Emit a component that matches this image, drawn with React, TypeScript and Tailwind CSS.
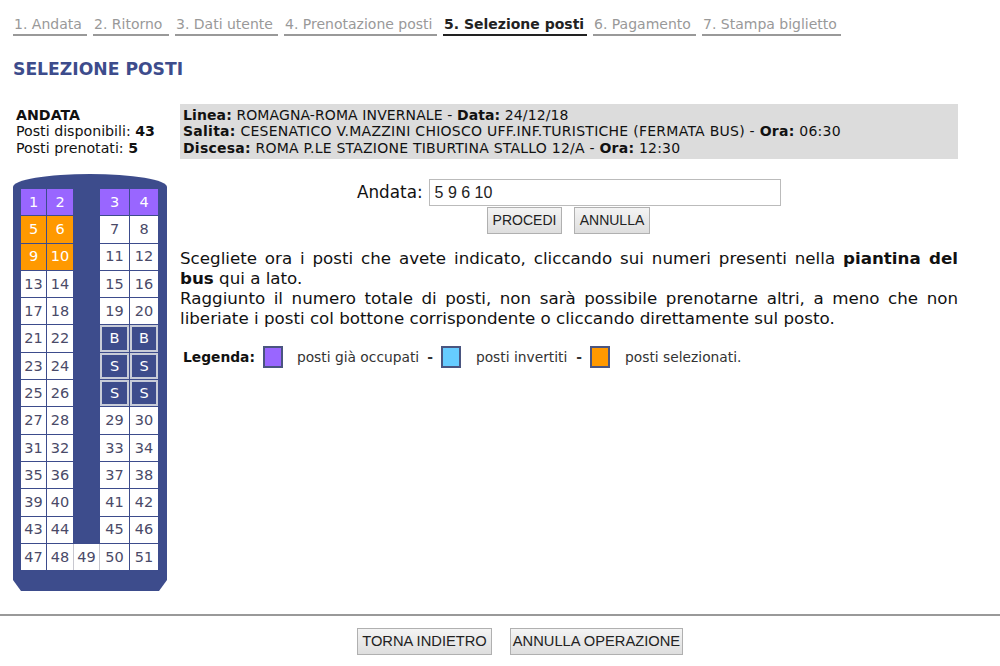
const font = "font-['DejaVu_Sans',Verdana,sans-serif]";

const steps = [
  { label: '1. Andata', width: 'w-[74px]' },
  { label: '2. Ritorno', width: 'w-[76px]' },
  { label: '3. Dati utente', width: 'w-[103px]' },
  { label: '4. Prenotazione posti', width: 'w-[153px]' },
  { label: '5. Selezione posti', width: 'w-[144px]', active: true },
  { label: '6. Pagamento', width: 'w-[103px]' },
  { label: '7. Stampa biglietto', width: 'w-[139px]' },
];

const occupied = [1, 2, 3, 4];
const selected = [5, 6, 9, 10];

function Seat({ n, width }: { n: number | string; width: string }) {
  if (typeof n === 'string') {
    return (
      <div
        className={`flex h-full items-center justify-center border-2 border-[#c8ccd8] bg-[#3d4c8c] text-[14.5px] leading-none text-white ${width}`}
      >
        {n}
      </div>
    );
  }
  let color = 'bg-white text-[#4a4a68]';
  if (occupied.includes(n)) color = 'bg-[#9966ff] text-white';
  if (selected.includes(n)) color = 'bg-[#ff9900] text-white';
  return (
    <div className={`flex h-full items-center justify-center text-[14.5px] leading-none ${width} ${color}`}>{n}</div>
  );
}

function Row({ left, right }: { left: [number, number]; right: [number | string, number | string] }) {
  return (
    <div className="mb-px flex h-[26.3px]">
      <Seat n={left[0]} width="w-[25px]" />
      <div className="w-px" />
      <Seat n={left[1]} width="w-[26px]" />
      <div className="w-[27px]" />
      <Seat n={right[0]} width="w-[29px]" />
      <div className="w-px" />
      <Seat n={right[1]} width="w-[28px]" />
    </div>
  );
}

function Bus() {
  const rows: [[number, number], [number | string, number | string]][] = [
    [[1, 2], [3, 4]],
    [[5, 6], [7, 8]],
    [[9, 10], [11, 12]],
    [[13, 14], [15, 16]],
    [[17, 18], [19, 20]],
    [[21, 22], ['B', 'B']],
    [[23, 24], ['S', 'S']],
    [[25, 26], ['S', 'S']],
    [[27, 28], [29, 30]],
    [[31, 32], [33, 34]],
    [[35, 36], [37, 38]],
    [[39, 40], [41, 42]],
    [[43, 44], [45, 46]],
  ];
  return (
    <div className="h-[417px] w-[154px] rounded-t-[77px_13px] bg-[#3d4c8c] pl-[8px] pt-[15px] [clip-path:polygon(0_0,100%_0,100%_406px,146px_100%,8px_100%,0_406px)]">
      {rows.map((row) => (
        <Row key={row[0][0]} left={row[0]} right={row[1]} />
      ))}
      <div className="flex h-[26.3px]">
        <Seat n={47} width="w-[25px]" />
        <div className="w-px" />
        <Seat n={48} width="w-[26px]" />
        <Seat n={49} width="w-[26px] border-l border-[#c8c8d0]" />
        <div className="w-px bg-[#c8c8d0]" />
        <Seat n={50} width="w-[29px]" />
        <div className="w-px" />
        <Seat n={51} width="w-[28px]" />
      </div>
    </div>
  );
}

function GreyButton({ label, className }: { label: string; className: string }) {
  return (
    <button
      className={`h-[27px] whitespace-nowrap border border-[#b0b0b0] bg-gradient-to-b from-[#f4f4f4] to-[#dedede] font-['Liberation_Sans',sans-serif] text-[#222] ${className}`}
    >
      {label}
    </button>
  );
}

function LegendBox({ color }: { color: string }) {
  return <span className={`h-[22px] w-[20px] border-2 border-[#4a5580] ${color}`} />;
}

export default function App() {
  return (
    <div className={`${font} h-[666px] w-[1000px] overflow-hidden bg-white text-[#111]`}>
      <div className="flex gap-[6px] pl-[13px] pt-[15px]">
        {steps.map((step) => (
          <div
            key={step.label}
            className={`h-[21px] whitespace-nowrap border-b-2 pl-px text-[14px] leading-[19px] ${step.width} ${step.active ? 'border-[#222] font-bold text-[#222]' : 'border-[#999] text-[#999]'}`}
          >
            {step.label}
          </div>
        ))}
      </div>

      <h1 className="ml-[13px] mt-[23px] text-[17.2px] font-bold leading-[20px] text-[#3d4c8c]">SELEZIONE POSTI</h1>

      <div className="ml-[13px] mt-[25px] flex">
        <div className="w-[167px] shrink-0">
          <div className="ml-[3px] h-[70px] pt-[3px] text-[14.2px] leading-[16.3px]">
            <div className="font-bold">ANDATA</div>
            <div>
              Posti disponibili: <b>43</b>
            </div>
            <div>
              Posti prenotati: <b>5</b>
            </div>
          </div>
          <Bus />
        </div>

        <div className="w-[778px]">
          <div className="h-[55px] bg-[#dcdcdc] pl-[3px] pt-[3px] text-[14px] leading-[16.3px]">
            <div className="tracking-[0.1px]">
              <b>Linea:</b> ROMAGNA-ROMA INVERNALE - <b>Data:</b> 24/12/18
            </div>
            <div className="tracking-[0.26px]">
              <b>Salita:</b> CESENATICO V.MAZZINI CHIOSCO UFF.INF.TURISTICHE (FERMATA BUS) - <b>Ora:</b> 06:30
            </div>
            <div className="tracking-[0.23px]">
              <b>Discesa:</b> ROMA P.LE STAZIONE TIBURTINA STALLO 12/A - <b>Ora:</b> 12:30
            </div>
          </div>

          <div className="ml-[177px] mt-[20px] flex items-center">
            <label className="mr-[6px] text-[16.8px]">Andata:</label>
            <input
              readOnly
              value="5 9 6 10"
              className="h-[27px] w-[352px] border border-[#bbb] px-[5px] font-['Liberation_Sans',sans-serif] text-[16px] text-[#222]"
            />
          </div>
          <div className="ml-[307px] mt-px flex gap-[12px]">
            <GreyButton label="PROCEDI" className="w-[75px] text-[14px]" />
            <GreyButton label="ANNULLA" className="w-[76px] text-[14px]" />
          </div>

          <p className="mt-[14px] text-justify text-[16.7px] leading-[20px]">
            Scegliete ora i posti che avete indicato, cliccando sui numeri presenti nella <b>piantina del bus</b> qui a
            lato.
            <br />
            Raggiunto il numero totale di posti, non sarà possibile prenotarne altri, a meno che non liberiate i posti
            col bottone corrispondente o cliccando direttamente sul posto.
          </p>

          <div className="ml-[3px] mt-[18px] flex items-center text-[13.8px] text-[#333]">
            <b className="text-[#111]">Legenda:</b>
            <span className="ml-[8px] flex items-center gap-[14px]">
              <LegendBox color="bg-[#9966ff]" />
              posti già occupati
            </span>
            <span className="mx-[8px] font-bold">-</span>
            <span className="flex items-center gap-[15px]">
              <LegendBox color="bg-[#66ccff]" />
              posti invertiti
            </span>
            <span className="ml-[9px] mr-[8px] font-bold">-</span>
            <span className="flex items-center gap-[15px]">
              <LegendBox color="bg-[#ff9900]" />
              posti selezionati.
            </span>
          </div>
        </div>
      </div>

      <div className="mt-[23px] flex h-[52px] justify-center gap-[18px] border-t-2 border-[#999] pl-[40px] pt-[12px]">
        <GreyButton label="TORNA INDIETRO" className="w-[135px] text-[14.7px]" />
        <GreyButton label="ANNULLA OPERAZIONE" className="w-[173px] text-[14.7px]" />
      </div>
    </div>
  );
}
